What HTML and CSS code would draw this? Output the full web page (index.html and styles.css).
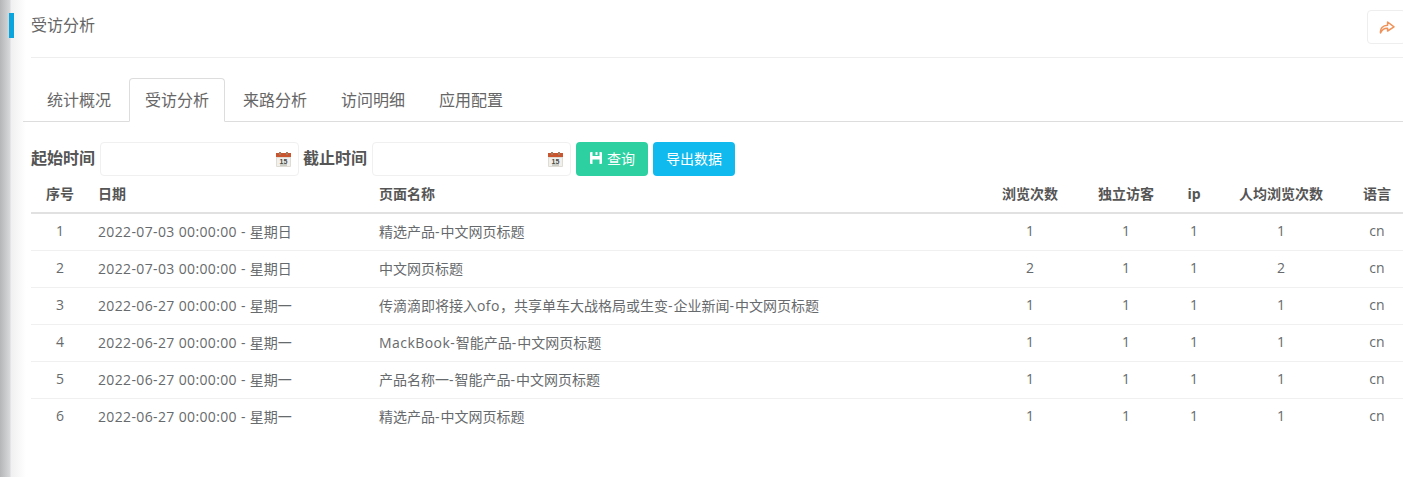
FILE: index.html
```html
<!DOCTYPE html>
<html lang="zh-CN">
<head>
<meta charset="utf-8">
<title>受访分析</title>
<link rel="stylesheet" href="styles.css">
</head>
<body>
<div class="shell">
  <main class="content">
    <header class="head">
      <div class="head-title"><span class="marker"></span><span class="title">受访分析</span></div>
      <button class="share" type="button" aria-label="分享">
        <svg width="16" height="14" viewBox="0 0 16 14" fill="none" stroke="#f0935a" stroke-width="1.500" stroke-linejoin="round" stroke-linecap="round"><path d="M1.500 13C1 8.500 3.600 5.400 8.600 5.300V2L15 6.800 8.600 11V8.200C5.400 8 3 9.600 1.500 13Z"/></svg>
      </button>
    </header>
    <nav class="tabs">
      <a class="tab">统计概况</a>
      <a class="tab active">受访分析</a>
      <a class="tab">来路分析</a>
      <a class="tab">访问明细</a>
      <a class="tab">应用配置</a>
    </nav>
    <form class="filters">
      <label class="flabel">起始时间</label>
      <div class="date-input">
        <svg class="cal" width="17" height="17" viewBox="0 0 17 17"><rect x="1" y="2" width="15" height="14" rx="1" fill="#dedcd5"/><rect x="2" y="7" width="13" height="8" fill="#f1f0ec"/><rect x="1" y="2" width="15" height="4" fill="#c9552f"/><rect x="4" y="1" width="2" height="3" fill="#a07c62"/><rect x="11" y="1" width="2" height="3" fill="#a07c62"/><text class="cal-day" x="8.500" y="12.500">15</text><rect x="5" y="13.500" width="7" height="1" fill="#a8a8a0"/></svg>
      </div>
      <label class="flabel">截止时间</label>
      <div class="date-input">
        <svg class="cal" width="17" height="17" viewBox="0 0 17 17"><rect x="1" y="2" width="15" height="14" rx="1" fill="#dedcd5"/><rect x="2" y="7" width="13" height="8" fill="#f1f0ec"/><rect x="1" y="2" width="15" height="4" fill="#c9552f"/><rect x="4" y="1" width="2" height="3" fill="#a07c62"/><rect x="11" y="1" width="2" height="3" fill="#a07c62"/><text class="cal-day" x="8.500" y="12.500">15</text><rect x="5" y="13.500" width="7" height="1" fill="#a8a8a0"/></svg>
      </div>
      <button class="btn btn-green" type="button">
        <svg width="14" height="14" viewBox="0 0 14 14"><path fill="#fff" d="M1 1h2.500v4h7V1H12a1 1 0 0 1 1 1v10a1 1 0 0 1-1 1h-1.500V8.500h-7V13H2a1 1 0 0 1-1-1V2a1 1 0 0 1 1-1z"/><rect x="6.500" y="1" width="2" height="3" fill="#fff"/></svg>
        <span>查询</span>
      </button>
      <button class="btn btn-blue" type="button"><span>导出数据</span></button>
    </form>
    <table class="data">
      <colgroup>
        <col class="c-no"><col class="c-date"><col class="c-page"><col class="c-pv"><col class="c-uv"><col class="c-ip"><col class="c-avg"><col class="c-lang">
      </colgroup>
      <thead>
        <tr><th class="ctr">序号</th><th>日期</th><th>页面名称</th><th class="ctr">浏览次数</th><th class="ctr">独立访客</th><th class="ctr">ip</th><th class="ctr">人均浏览次数</th><th class="ctr">语言</th></tr>
      </thead>
      <tbody>
        <tr><td class="ctr">1</td><td class="date">2022-07-03 00:00:00 - <span class="wk">星期日</span></td><td>精选产品<span class="hy">-</span>中文网页标题</td><td class="ctr">1</td><td class="ctr">1</td><td class="ctr">1</td><td class="ctr">1</td><td class="ctr">cn</td></tr>
        <tr><td class="ctr">2</td><td class="date">2022-07-03 00:00:00 - <span class="wk">星期日</span></td><td>中文网页标题</td><td class="ctr">2</td><td class="ctr">1</td><td class="ctr">1</td><td class="ctr">2</td><td class="ctr">cn</td></tr>
        <tr><td class="ctr">3</td><td class="date">2022-06-27 00:00:00 - <span class="wk">星期一</span></td><td>传滴滴即将接入<span class="lat">ofo</span>，共享单车大战格局或生变<span class="hy">-</span>企业新闻<span class="hy">-</span>中文网页标题</td><td class="ctr">1</td><td class="ctr">1</td><td class="ctr">1</td><td class="ctr">1</td><td class="ctr">cn</td></tr>
        <tr><td class="ctr">4</td><td class="date">2022-06-27 00:00:00 - <span class="wk">星期一</span></td><td><span class="lat">MackBook</span><span class="hy">-</span>智能产品<span class="hy">-</span>中文网页标题</td><td class="ctr">1</td><td class="ctr">1</td><td class="ctr">1</td><td class="ctr">1</td><td class="ctr">cn</td></tr>
        <tr><td class="ctr">5</td><td class="date">2022-06-27 00:00:00 - <span class="wk">星期一</span></td><td>产品名称一<span class="hy">-</span>智能产品<span class="hy">-</span>中文网页标题</td><td class="ctr">1</td><td class="ctr">1</td><td class="ctr">1</td><td class="ctr">1</td><td class="ctr">cn</td></tr>
        <tr><td class="ctr">6</td><td class="date">2022-06-27 00:00:00 - <span class="wk">星期一</span></td><td>精选产品<span class="hy">-</span>中文网页标题</td><td class="ctr">1</td><td class="ctr">1</td><td class="ctr">1</td><td class="ctr">1</td><td class="ctr">cn</td></tr>
      </tbody>
    </table>
  </main>
</div>
</body>
</html>
```
FILE: styles.css
```css
* { box-sizing: border-box; }
html, body { margin: 0; height: 100%; overflow: hidden; background: #fff; }
body { font-family: "Open Sans", "Noto Sans CJK SC", sans-serif; font-size: 14px; color: #676a6c; }
.shell { width: 1403px; height: 477px; overflow: hidden; padding-left: 12px; background: linear-gradient(to right, #b4b6b8 0, #d8d9db 10px, #f0f0f1 11px, #fff 26px); }
.content { width: 1394px; }

.head { display: flex; justify-content: space-between; margin-left: 19px; height: 58px; border-bottom: 1px solid #eeeeee; align-items: flex-start; }
.head-title { display: flex; align-items: center; height: 26px; margin-top: 12px; position: relative; }
.marker { position: absolute; left: -22px; top: 1px; width: 5px; height: 25px; background: #0aa5df; }
.title { font-size: 16px; line-height: 26px; color: #666; }
.share { width: 39px; height: 34px; margin-top: 10px; background: #fff; border: 1px solid #eee; border-radius: 4px; padding: 0; display: flex; align-items: center; justify-content: flex-start; }
.share svg { margin-left: 11px; }

.tabs { display: flex; margin-top: 20px; margin-left: 11px; height: 44px; border-bottom: 1px solid #dddddd; padding-left: 8px; }
.tab { display: block; height: 44px; padding: 0 16px; font-size: 16px; line-height: 44px; color: #666; margin-right: 2px; }
.tab.active { line-height: 43px; background: #fff; border: 1px solid #dddddd; border-bottom-color: #fff; border-radius: 4px 4px 0 0; padding: 0 15px; }

.filters { display: flex; align-items: center; margin: 20px 0 0 19px; height: 34px; }
.flabel { font-size: 16px; font-weight: 700; color: #555; line-height: 32px; height: 34px; width: 64px; margin-right: 5px; white-space: nowrap; }
.date-input { width: 199px; height: 34px; border: 1px solid #f0f0f0; border-radius: 4px; margin-right: 4px; display: flex; align-items: center; justify-content: flex-end; padding-right: 6px; }
.cal-day { font-family: "Liberation Sans", sans-serif; font-size: 7px; font-weight: 700; fill: #4a4a45; text-anchor: middle; }
.btn { height: 34px; border: 0; border-radius: 4px; color: #fff; font: inherit; font-size: 14px; display: flex; align-items: center; gap: 4px; justify-content: center; padding: 0 0 2px; }
.btn-green { width: 72px; background: #2dd0a0; margin-left: 1px; margin-right: 5px; }
.btn-blue { width: 82px; background: #10b9ee; }

.data { margin: 0 0 0 19px; width: 1375px; border-collapse: collapse; table-layout: fixed; }
.c-no { width: 58px; } .c-date { width: 281px; } .c-page { width: 612px; } .c-pv { width: 96px; } .c-uv { width: 96px; } .c-ip { width: 40px; } .c-avg { width: 134px; } .c-lang { width: 58px; }
.data th { height: 37px; padding: 0 9px 2px; border-bottom: 2px solid #e1e1e1; font-size: 14px; font-weight: 700; color: #555; text-align: left; white-space: nowrap; }
.data td { height: 37px; padding: 0 9px 2px; border-bottom: 1px solid #f0f0f0; font-size: 14px; color: #676a6c; white-space: nowrap; }
.data tbody tr:last-child td { border-bottom: 0; }
.data .ctr { text-align: center; }
.data .date { letter-spacing: 0.36px; }
.data .wk { letter-spacing: 0; }
.data .hy { letter-spacing: 1px; }
.data .lat { letter-spacing: 0.45px; }
```
